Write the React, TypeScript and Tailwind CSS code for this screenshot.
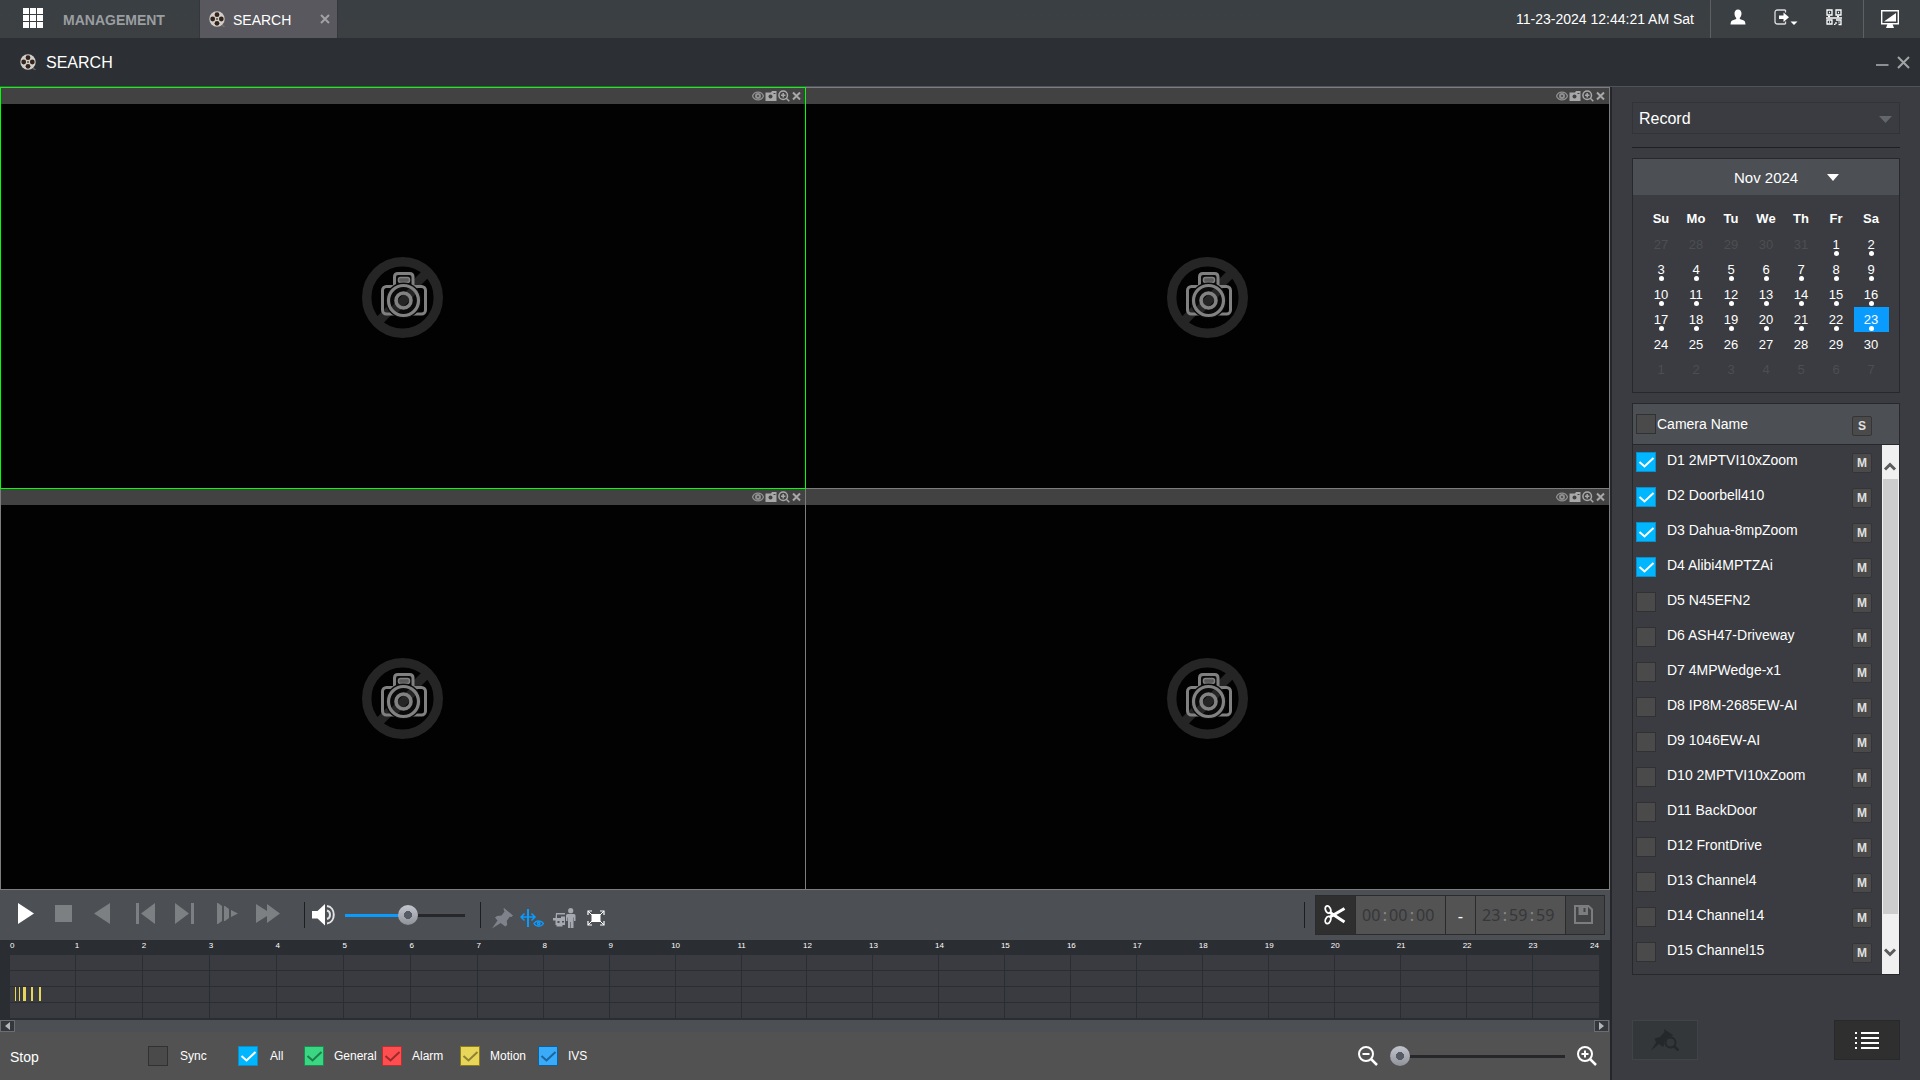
import type { ReactNode } from "react"
import clsx from "clsx"

const cameras = [
  "D1 2MPTVI10xZoom",
  "D2 Doorbell410",
  "D3 Dahua-8mpZoom",
  "D4 Alibi4MPTZAi",
  "D5 N45EFN2",
  "D6 ASH47-Driveway",
  "D7 4MPWedge-x1",
  "D8 IP8M-2685EW-AI",
  "D9 1046EW-AI",
  "D10 2MPTVI10xZoom",
  "D11 BackDoor",
  "D12 FrontDrive",
  "D13 Channel4",
  "D14 Channel14",
  "D15 Channel15",
]

const weekDays = ["Su", "Mo", "Tu", "We", "Th", "Fr", "Sa"]

// six weeks starting on Sunday, Oct 27
const weeks = Array.from({ length: 6 }, (_, w) =>
  Array.from({ length: 7 }, (_, d) => {
    const n = w * 7 + d - 4
    if (n < 1) return { day: n + 31, current: false, recorded: false }
    if (n > 30) return { day: n - 30, current: false, recorded: false }
    return { day: n, current: true, recorded: n <= 23 }
  })
)

// start and length in hours
const motionEvents = [
  { start: 0.076, length: 0.016 },
  { start: 0.136, length: 0.016 },
  { start: 0.197, length: 0.045 },
  { start: 0.318, length: 0.03 },
  { start: 0.439, length: 0.03 },
]

const filters = [
  { label: "General", box: "bg-[#3ad683] border-[#1f8a50]", tick: "#1d7d49", width: "w-[78px]" },
  { label: "Alarm", box: "bg-[#ff4e50] border-[#b53234]", tick: "#9a2a2c", width: "w-[78px]" },
  { label: "Motion", box: "bg-[#e8d65b] border-[#8d7c1c]", tick: "#8d8233", width: "w-[78px]" },
  { label: "IVS", box: "bg-[#3aabf8] border-[#0f5f9d]", tick: "#1d659d", width: "w-[60px]" },
]

const hourColumns = "grid grid-cols-[66fr_repeat(6,67fr)_repeat(17,66fr)]"

const App = () => {
  return (
    <div className="flex min-h-screen flex-col bg-[#2c3034] font-['Liberation_Sans',Arial,sans-serif] text-sm text-white">
      <TopBar />
      <TitleBar />
      <div className="flex flex-1">
        <main className="flex min-w-0 flex-1 flex-col">
          <div className="grid flex-1 grid-cols-2 grid-rows-2 gap-px bg-[#7d7d7d] p-px">
            <VideoCell selected />
            <VideoCell />
            <VideoCell />
            <VideoCell />
          </div>
          <PlaybackBar />
          <Timeline />
          <Footer />
        </main>
        <SidePanel />
      </div>
    </div>
  )
}

export default App

function TopBar() {
  return (
    <header className="flex h-[38px] items-stretch bg-linear-to-b from-[#3a3f43] to-[#3c4043]">
      <button aria-label="Menu" className="ml-[23px] grid grid-cols-3 content-center gap-px pb-0.5">
        {Array.from({ length: 9 }, (_, i) => (
          <span key={i} className="size-1.5 bg-white" />
        ))}
      </button>
      <button className="ml-5 w-[136px] pt-0.5 text-left font-bold text-[#9a9ea1]">MANAGEMENT</button>
      <div className="flex w-[139px] items-center border-x border-[#34373b] bg-[#58585e] pr-[3px] pl-[9px]">
        <ReelIcon />
        <span className="ml-2 flex-1 pt-0.5">SEARCH</span>
        <button aria-label="Close tab" className="flex size-[18px] items-center justify-center">
          <svg width="10" height="10" viewBox="0 0 10 10" stroke="#a2a2a5" strokeWidth="2">
            <path d="M1 1l8 8M9 1L1 9" />
          </svg>
        </button>
      </div>
      <div className="ml-auto flex items-center pr-4">{"11-23-2024 12:44:21 AM Sat"}</div>
      <div className="flex w-[153px] items-center justify-between border-l border-[#5d6164] pr-[21px] pb-1 pl-[19px]">
        <button aria-label="User">
          <svg width="16" height="16" viewBox="0 0 16 16" fill="#fff">
            <path d="M8 .5c2.300 0 3.500 1.700 3.500 4 0 1.900-.7 3.500-1.700 4.400v1l4 1.500c1 .4 1.500 1.700 1.700 4.100H.5c.2-2.400.7-3.700 1.700-4.100l4-1.500v-1C5.200 8 4.500 6.400 4.500 4.500c0-2.300 1.200-4 3.500-4z" />
          </svg>
        </button>
        <button aria-label="Log out">
          <svg width="24" height="17" viewBox="0 0 24 17">
            <path d="M11.500 1H3.500Q1 1 1 3.500v9Q1 15 3.500 15h8M11.500 1v2.500M11.500 15v-2.500" fill="none" stroke="#dcdcdc" strokeWidth="1.300" />
            <path d="M5 6.500h4.500V3.500L15 8.200l-5.500 4.700V10H5z" fill="#fff" />
            <path d="M16.500 12.500h7L20 16z" fill="#fff" />
          </svg>
        </button>
        <button aria-label="QR code">
          <svg width="16" height="17" viewBox="0 0 16 17" fill="none" stroke="#fff" strokeWidth="1.300">
            <path d="M1 1h5v5H1zM10 1h5v5h-5zM1 11h5v4H1zM0 9h16" />
            <path d="M3 3.500h1M12 3.500h1M3 13h1M2 7.500h2M11 7.500h2M10 11h5v4.500h-2.500M10 13v2M8 15.300h1.500M12.500 13h1" />
          </svg>
        </button>
      </div>
      <button aria-label="Display" className="flex w-[57px] items-center border-l border-[#5d6164] pl-[17px]">
        <svg width="18" height="18" viewBox="0 0 18 18" fill="#fff">
          <path d="M.7.7h16.600v13H.7z" fill="none" stroke="#fff" strokeWidth="1.400" />
          <path d="M15 3v8.500H3zM6.500 14h5l1.500 4H5z" />
        </svg>
      </button>
    </header>
  )
}

function TitleBar() {
  return (
    <div className="flex h-[49px] items-center rounded-t-md border-b border-[#50545a] bg-[#2c3034] pr-2.5 pl-5">
      <ReelIcon />
      <h1 className="ml-2.5 pt-0.5 text-base">SEARCH</h1>
      <div className="ml-auto flex items-center gap-2">
        <button aria-label="Minimize">
          <svg width="13" height="14" viewBox="0 0 13 14" stroke="#8e9193" strokeWidth="2">
            <path d="M0 10h12.500" />
          </svg>
        </button>
        <button aria-label="Close">
          <svg width="13" height="13" viewBox="0 0 13 13" stroke="#a2a4a5" strokeWidth="2">
            <path d="M1 1l11 11M12 1L1 12" />
          </svg>
        </button>
      </div>
    </div>
  )
}

function ReelIcon() {
  return (
    <svg width="16" height="16" viewBox="0 0 16 16">
      <circle cx="8" cy="8" r="7.700" fill="#d2cfca" />
      <circle cx="8" cy="3.700" r="2.400" fill="#33231b" />
      <circle cx="8" cy="12.300" r="2.400" fill="#33231b" />
      <circle cx="3.700" cy="8" r="2.400" fill="#33231b" />
      <circle cx="12.300" cy="8" r="2.400" fill="#33231b" />
      <circle cx="8" cy="8" r="1" fill="#55504a" />
      <path d="M12.500 14.500L15.500 15.500" stroke="#8c7a66" />
    </svg>
  )
}

function VideoCell({ selected = false }: { selected?: boolean }) {
  return (
    <section className={clsx("flex flex-col bg-[#020202]", selected && "z-10 outline outline-[#00ff00]")}>
      <div className="flex h-4 items-center justify-end gap-px bg-[#424242] pr-[3px] text-[#a0a0a0]">
        <button aria-label="Show">
          <svg width="12" height="12" viewBox="0 0 12 12" fill="none" stroke="#8f8f8f" strokeWidth="1.300">
            <path d="M.5 6C2.500 .8 9.500 .8 11.500 6 9.500 11.200 2.500 11.200 .5 6z" />
            <circle cx="6" cy="6" r="2" strokeWidth="2" />
          </svg>
        </button>
        <button aria-label="Snapshot">
          <svg width="12" height="12" viewBox="0 0 12 12">
            <path d="M1 2.500h5L7 1h4.500v10H.5V2.500z" fill="#a8a8a8" />
            <circle cx="5.500" cy="6.500" r="2" fill="#424242" />
            <path d="M8.500 3.500h2" stroke="#424242" />
          </svg>
        </button>
        <button aria-label="Zoom">
          <svg width="12" height="12" viewBox="0 0 12 12" fill="none" stroke="#a8a8a8" strokeWidth="1.500">
            <circle cx="5.200" cy="5.200" r="4.300" />
            <path d="M5.200 3v4.400M3 5.200h4.400M8.300 8.300l3 3" />
          </svg>
        </button>
        <button aria-label="Close">
          <svg width="11" height="10" viewBox="0 0 11 10" stroke="#a8a8a8" strokeWidth="2">
            <path d="M2 1.500l7 7M9 1.500l-7 7" />
          </svg>
        </button>
      </div>
      <div className="flex flex-1 items-center justify-center pt-0.5">
        <svg width="81" height="81" viewBox="0 0 81 81" fill="none">
          <circle cx="40.500" cy="40.500" r="35.800" stroke="#252525" strokeWidth="9.400" />
          <path d="M64.500 16L16 65" stroke="#252525" strokeWidth="9" />
          <g stroke="#808080" strokeWidth="3">
            <rect x="20.500" y="29.500" width="43" height="27.500" rx="4" />
            <path d="M32.500 29V20q0-3.500 3.500-3.500h11.500q3.500 0 3.500 3.500v9" fill="#0a0a0a" />
          </g>
          <rect x="36.500" y="20.500" width="11" height="5" rx="2" fill="#5a5a5a" stroke="#808080" strokeWidth="1.500" />
          <circle cx="41.500" cy="43.500" r="18" fill="#0a0a0a" />
          <path d="M53 31.500L30 55.500" stroke="#252525" strokeWidth="9" />
          <circle cx="41.500" cy="43.500" r="15" stroke="#828282" strokeWidth="3.200" />
          <circle cx="41.500" cy="43.500" r="7.500" stroke="#828282" strokeWidth="3.600" />
        </svg>
      </div>
    </section>
  )
}

interface PlayButtonProps {
  label: string
  path: string
  className: string
  active?: boolean
}

function PlayButton({ label, path, className, active = false }: PlayButtonProps) {
  return (
    <button aria-label={label} className={className}>
      <svg width="26" height="22" viewBox="0 0 26 22" fill={active ? "#fff" : "#7d8082"}>
        <path d={path} />
      </svg>
    </button>
  )
}

function PlaybackBar() {
  return (
    <div className="flex h-[50px] items-center bg-[#4c4f54]">
      <div className="flex pb-0.5 pl-[18px]">
        <PlayButton active label="Play" className="w-[37px]" path="M0 0l16 10.500L0 21z" />
        <PlayButton label="Stop" className="w-[39px]" path="M0 2h17v17H0z" />
        <PlayButton label="Reverse" className="w-[42px]" path="M16 0v21L0 10.500z" />
        <PlayButton label="Previous" className="w-[39px]" path="M0 0h3v21H0zM19 0v21L5 10.500z" />
        <PlayButton label="Next" className="w-[42px]" path="M0 0l14 10.500L0 21zM16 0h3v21h-3z" />
        <PlayButton label="Slow" className="w-[39px]" path="M0 0h1l4 3v15l-4 3H0zM7 3h1l4 3v9l-4 3H7zM14 7l7 3.500-7 3.500z" />
        <PlayButton label="Fast" className="w-12" path="M0 1l11 7V1l13 9.500L11 20v-7L0 20z" />
      </div>
      <span className="h-[26px] w-px bg-[#1c1e21]" />
      <button aria-label="Mute" className="ml-[7px]">
        <svg width="24" height="22" viewBox="0 0 24 22">
          <path d="M0 7h5.500L13 0v21.500L5.500 14.500H0z" fill="#fff" />
          <path d="M15 6.500c4 1 4 7.500 0 8.500M15 2c9 1 9 16.500 0 17.500" fill="none" stroke="#e4e4e4" strokeWidth="2" />
        </svg>
      </button>
      <Slider
        label="Volume"
        value={53}
        className="ml-[9px] w-[120px] bg-[linear-gradient(to_right,#0a9bff_53%,#25272b_53%)]"
      />
      <span className="ml-[15px] h-[26px] w-px bg-[#1c1e21]" />
      <div className="flex items-center pt-1.5 pl-[11px]">
        <button aria-label="Mark" className="w-7">
          <svg width="21" height="21" viewBox="0 0 21 21" fill="#7f828a">
            <path d="M12 0l9 7.500-1.500 1.500-1.700-.3-3 4 .4 4.300-2 1.500-4.500-3.500L0 20.500 5.500 12.500 3 9.500l2-1.500 4.500-.5 3-4L11.500 1z" />
          </svg>
        </button>
        <button aria-label="Smart search" className="w-[33px]">
          <svg width="24" height="20" viewBox="0 0 24 20" fill="none" stroke="#0a9bff" strokeWidth="2">
            <path d="M8 1v18" strokeWidth="2" />
            <path d="M1 9h14M4.500 5.500L1 9l3.500 3.500M11.500 5.500L15 9l-3.500 3.500" strokeWidth="1.500" />
            <path d="M14 15.500c2-3.500 7.500-3.500 9.500 0-2 3.500-7.500 3.500-9.500 0z" strokeWidth="1.500" />
            <circle cx="18.700" cy="15.500" r="1.200" strokeWidth="1.500" />
          </svg>
        </button>
        <button aria-label="Human and vehicle" className="w-[34px]">
          <svg width="23" height="20" viewBox="0 0 23 20" fill="#a6a9b0">
            <circle cx="17.700" cy="2.700" r="2.600" />
            <path d="M14.500 6h6.500q1.500 0 1.500 1.500V13H21V9.500h-.5V20h-2.500v-6h-.6v6H15V9.500h-.5V13H13V7.500q0-1.500 1.500-1.500z" />
            <path d="M3 5h9v1.500H4V10h4V8.500h4V17H9.500v1.500h-6V17H2.500v-4.500H0V10h2.500z" />
            <path d="M4.500 13h2v2h-2zM9 13h2v1.500H9z" fill="#4c4f54" />
          </svg>
        </button>
        <button aria-label="Full screen">
          <svg width="18" height="16" viewBox="0 0 18 16" fill="none" stroke="#fff">
            <path d="M5 4.500h8v7H5z" fill="#fff" />
            <path d="M1 5V1h4M13 1h4v4M17 11v4h-4M5 15H1v-4" strokeWidth="1.200" />
            <path d="M1 1l4 4M17 1l-4 4M17 15l-4-4M1 15l4-4" />
          </svg>
        </button>
      </div>
      <span className="ml-auto h-[26px] w-px bg-[#1c1e21]" />
      <div className="mr-[5px] ml-2.5 flex h-10 border border-[#2b2b2c] bg-[#535353]">
        <button aria-label="Clip" className="flex w-10 items-center justify-center border-r border-[#2b2b2c] bg-[#2f2f30] pr-0.5">
          <svg width="22" height="20" viewBox="0 0 22 20" fill="none" stroke="#fff">
            <ellipse cx="4" cy="4.500" rx="2.500" ry="3.700" strokeWidth="1.800" transform="rotate(-25 4 4.500)" />
            <ellipse cx="4" cy="15" rx="2.500" ry="3.700" strokeWidth="1.800" transform="rotate(25 4 15)" />
            <path d="M6 7.500L20.500 17M6 12L20.500 3.500" strokeWidth="3" />
          </svg>
        </button>
        <TimeField label="Start" parts={["00", "00", "00"]} />
        <span className="flex w-[31px] items-center justify-center border-x border-[#2b2b2c] pt-1 text-base">-</span>
        <TimeField label="End" parts={["23", "59", "59"]} />
        <button aria-label="Save" className="flex w-[39px] items-center justify-center border-l border-[#2b2b2c] bg-[#434446] pr-1 pb-0.5">
          <svg width="19" height="19" viewBox="0 0 19 19" fill="none">
            <path d="M1 1h13.500L18 4.500V18H1z" stroke="#7b7d7f" strokeWidth="2" />
            <path d="M4.500 1h9.500v9H4.500z" fill="#7b7d7f" />
            <path d="M9.500 3h2v4h-2z" fill="#434446" />
          </svg>
        </button>
      </div>
    </div>
  )
}

function TimeField({ label, parts }: { label: string; parts: string[] }) {
  return (
    <div className="flex w-[89px] items-center justify-center pr-1 font-['Noto_Sans',sans-serif] text-base text-[#36373a]">
      {parts.map((part, i) => (
        <span key={i} className="flex">
          {i > 0 && <span className="w-2 text-center text-[#8b8b8b]">:</span>}
          <input
            aria-label={`${label} ${["hour", "minute", "second"][i]}`}
            defaultValue={part}
            className="w-[19px] bg-transparent outline-none"
          />
        </span>
      ))}
    </div>
  )
}

interface SliderProps {
  label: string
  value: number
  className: string
}

function Slider({ label, value, className }: SliderProps) {
  return (
    <input
      type="range"
      aria-label={label}
      defaultValue={value}
      className={clsx(
        "h-[3px] appearance-none [&::-webkit-slider-thumb]:size-5 [&::-webkit-slider-thumb]:appearance-none [&::-webkit-slider-thumb]:rounded-full [&::-webkit-slider-thumb]:bg-[radial-gradient(circle,#565b66_4px,transparent_4px),linear-gradient(#c3c6cf,#8f9299)]",
        className
      )}
    />
  )
}

function Timeline() {
  return (
    <div>
      <div className="h-20 bg-[#2a2d32] pr-[11px] pl-2.5">
        <div className={clsx(hourColumns, "h-[15px] pt-0.5 text-[8px] leading-2")}>
          {Array.from({ length: 24 }, (_, i) => (
            <div key={i} className="flex min-w-0 justify-between">
              <span className={clsx(i > 0 && "flex w-0 justify-center", i > 0 && i < 10 && "ml-px")}>{i}</span>
              {i === 23 && <span>24</span>}
            </div>
          ))}
        </div>
        <div className="flex flex-col gap-px">
          {[0, 1, 2, 3].map((row) => (
            <div key={row} className={clsx(hourColumns, "relative h-[15px]")}>
              {Array.from({ length: 24 }, (_, i) => (
                <span key={i} className={clsx("bg-[#393b40]", i < 23 && "border-r border-[#2a2d32]")} />
              ))}
              {row === 2 &&
                motionEvents.map((e) => (
                  <span
                    key={e.start}
                    className="absolute top-0 h-3.5 bg-[#e8d65b]"
                    style={{ left: `${(e.start / 24) * 100}%`, width: `${(e.length / 24) * 100}%` }}
                  />
                ))}
            </div>
          ))}
        </div>
      </div>
      <div className="flex h-3 justify-between bg-[#4c4f54] pr-px">
        <button aria-label="Scroll left" className="flex w-[15px] items-center justify-center border border-[#6a6d72] bg-[#34373b]">
          <svg width="5" height="8" viewBox="0 0 5 8" fill="#b4b7ba">
            <path d="M5 0v8L0 4z" />
          </svg>
        </button>
        <button aria-label="Scroll right" className="flex w-[15px] items-center justify-center border border-[#6a6d72] bg-[#34373b]">
          <svg width="5" height="8" viewBox="0 0 5 8" fill="#b4b7ba">
            <path d="M0 0v8l5-4z" />
          </svg>
        </button>
      </div>
    </div>
  )
}

interface CheckProps {
  checked?: boolean
  label?: string
  box?: string
  tick?: string
  className?: string
  children?: ReactNode
}

function Check({ checked = false, label, box, tick = "#fff", className, children }: CheckProps) {
  return (
    <label className={clsx("flex", className)}>
      <span className="relative flex size-5 shrink-0">
        <input
          type="checkbox"
          aria-label={label}
          defaultChecked={checked}
          className={clsx(
            "peer size-5 appearance-none border",
            box ?? "border-[#313133] bg-[#4a4a4a] checked:border-[#0c8fc9] checked:bg-[#00b7ff]"
          )}
        />
        <svg
          className="pointer-events-none absolute inset-0 hidden peer-checked:block"
          width="20"
          height="20"
          viewBox="0 0 20 20"
          fill="none"
          stroke={tick}
          strokeWidth="2"
        >
          <path d="M3.500 10l5 4.500 9-8.500" />
        </svg>
      </span>
      {children}
    </label>
  )
}

function Footer() {
  return (
    <footer className="flex h-12 items-center bg-[#525252] pl-2.5 text-xs">
      <span className="w-[138px] pt-0.5 text-sm">Stop</span>
      <Check className="w-[90px] items-center gap-3">Sync</Check>
      <Check checked className="w-[66px] items-center gap-3">All</Check>
      {filters.map((f) => (
        <Check key={f.label} checked box={f.box} tick={f.tick} className={clsx("items-center gap-2.5", f.width)}>
          {f.label}
        </Check>
      ))}
      <div className="ml-auto flex items-center pr-[13px]">
        <button aria-label="Zoom out">
          <ZoomIcon path="M4.500 8h7" />
        </button>
        <Slider label="Timeline zoom" value={0} className="mr-3 ml-3 w-[175px] bg-[#25272b]" />
        <button aria-label="Zoom in">
          <ZoomIcon path="M4.500 8h7M8 4.500v7" />
        </button>
      </div>
    </footer>
  )
}

function ZoomIcon({ path }: { path: string }) {
  return (
    <svg width="20" height="20" viewBox="0 0 20 20" fill="none" stroke="#fff" strokeWidth="2">
      <circle cx="8" cy="8" r="7" />
      <path d={path} />
      <path d="M13 13l6 6" strokeWidth="2.500" />
    </svg>
  )
}

function SidePanel() {
  return (
    <aside className="flex w-[310px] shrink-0 flex-col border-l-2 border-[#24262b] bg-[#3a3c41] px-5 pt-[15px] pb-5">
      <div className="relative">
        <select
          aria-label="Search type"
          className="h-8 w-full appearance-none border border-[#313337] bg-transparent pt-0.5 pl-1.5 text-base outline-none"
        >
          <option>Record</option>
        </select>
        <svg className="pointer-events-none absolute top-3.5 right-2" width="13" height="7" viewBox="0 0 13 7" fill="#63666a">
          <path d="M0 0h13L6.500 7z" />
        </svg>
      </div>
      <hr className="mt-[13px] border-[#1d1f22]" />
      <Calendar />
      <CameraList />
      <div className="mt-auto flex justify-between">
        <button aria-label="Search marks" className="flex h-10 w-[66px] items-center justify-center border border-[#404348] bg-[#33373a]">
          <svg width="28" height="22" viewBox="0 0 28 22" fill="#25282b">
            <path d="M13 0l9 6-1 1.500a6.500 6.500 0 0 0-7.500 8l-1.500 2.500-4-3L0 21.500 5 13.500 3.500 9.500 9 8l4.500-5z" />
            <circle cx="19.500" cy="13.500" r="5" fill="none" stroke="#25282b" strokeWidth="2" />
            <path d="M23 17l4.500 4.500" stroke="#25282b" strokeWidth="2.500" />
          </svg>
        </button>
        <button aria-label="File list" className="flex h-10 w-[66px] items-center justify-center border border-[#27292b] bg-[#2f2f30]">
          <svg width="24" height="18" viewBox="0 0 24 18" stroke="#fff" strokeWidth="2">
            <path d="M0 2h2M0 7h2M0 12h2M0 17h2M6 2h18M6 7h18M6 12h18M6 17h18" />
          </svg>
        </button>
      </div>
    </aside>
  )
}

function Calendar() {
  return (
    <div className="mt-2.5 border border-[#26282c] pb-2.5">
      <button className="flex h-9 w-full items-center bg-[#4c4f54] pt-px pl-[101px] text-[15px]">
        Nov 2024
        <svg className="ml-[29px]" width="12" height="7" viewBox="0 0 12 7" fill="#fff">
          <path d="M0 0h12L6 7z" />
        </svg>
      </button>
      <div className="pr-2.5 pl-[11px]">
        <table className="w-full table-fixed text-center text-[13px]">
          <thead>
            <tr className="h-[37px]">
              {weekDays.map((d) => (
                <th key={d} className="p-0 pt-3 pr-px">{d}</th>
              ))}
            </tr>
          </thead>
          <tbody>
            {weeks.map((week, i) => (
              <tr key={i} className="h-[25px]">
                {week.map(({ day, current, recorded }) => (
                  <td
                    key={day}
                    className={clsx(
                      "relative p-0 pr-px leading-none",
                      !current && "text-[#4c4e52]",
                      current && day === 23 && "bg-[#0a9bff]"
                    )}
                  >
                    {day}
                    {recorded && <span className="absolute bottom-px left-[15px] size-[5px] rounded-full bg-white" />}
                  </td>
                ))}
              </tr>
            ))}
          </tbody>
        </table>
      </div>
    </div>
  )
}

function CameraList() {
  return (
    <div className="mt-2.5 border border-[#26282c]">
      <div className="flex h-[41px] items-center border-b border-[#26282c] bg-[#4c4f54] pr-[27px] pl-[3px]">
        <Check className="flex-1 items-center gap-px">Camera Name</Check>
        <button className="mt-1 size-5 rounded-xs border border-[#353538] bg-[#4a4a4a] text-xs leading-none font-bold text-[#e0e0e0]">S</button>
      </div>
      <div className="flex">
        <ul className="flex-1 pb-1">
          {cameras.map((name, i) => (
            <li key={name} className="flex h-[35px] items-start pt-[7px] pr-2.5 pl-[3px]">
              <Check checked={i < 4} className="flex-1">
                <span className="ml-[11px] leading-4">{name}</span>
              </Check>
              <button
                aria-label={`${name} main stream`}
                className="mt-px size-5 rounded-xs border border-[#353538] bg-[#4a4a4a] text-xs leading-none font-bold text-[#e0e0e0]"
              >
                M
              </button>
            </li>
          ))}
        </ul>
        <div className="flex w-[17px] flex-col bg-[#f0f0f0] px-px">
          <button aria-label="Scroll up" className="flex h-[34px] items-end pb-2">
            <svg width="15" height="9" viewBox="0 0 15 9" fill="none" stroke="#5c5c5c" strokeWidth="3">
              <path d="M2 7.500l5-5 5 5" />
            </svg>
          </button>
          <div className="flex-1 bg-[#cdcdcd]" />
          <button aria-label="Scroll down" className="flex h-[60px] items-end pb-[17px]">
            <svg width="15" height="9" viewBox="0 0 15 9" fill="none" stroke="#5c5c5c" strokeWidth="3">
              <path d="M2 1.500l5 5 5-5" />
            </svg>
          </button>
        </div>
      </div>
    </div>
  )
}
